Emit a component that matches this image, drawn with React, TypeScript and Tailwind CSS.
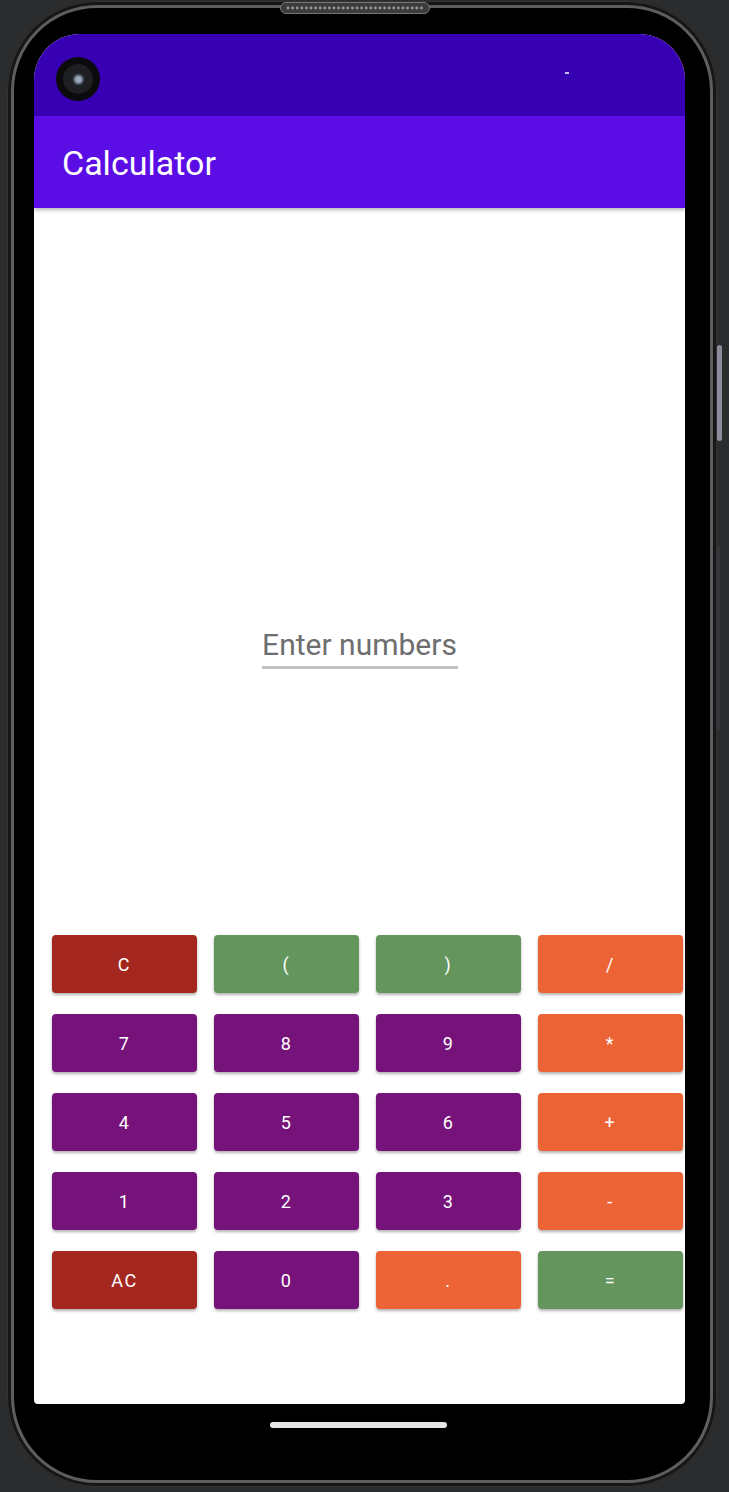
const keys = [
  { label: 'C', color: 'bg-[#a3271e]' },
  { label: '(', color: 'bg-[#63955d]' },
  { label: ')', color: 'bg-[#63955d]' },
  { label: '/', color: 'bg-[#ec6436]' },
  { label: '7', color: 'bg-[#76137a]' },
  { label: '8', color: 'bg-[#76137a]' },
  { label: '9', color: 'bg-[#76137a]' },
  { label: '*', color: 'bg-[#ec6436]' },
  { label: '4', color: 'bg-[#76137a]' },
  { label: '5', color: 'bg-[#76137a]' },
  { label: '6', color: 'bg-[#76137a]' },
  { label: '+', color: 'bg-[#ec6436]' },
  { label: '1', color: 'bg-[#76137a]' },
  { label: '2', color: 'bg-[#76137a]' },
  { label: '3', color: 'bg-[#76137a]' },
  { label: '-', color: 'bg-[#ec6436]' },
  { label: 'AC', color: 'bg-[#a3271e]' },
  { label: '0', color: 'bg-[#76137a]' },
  { label: '.', color: 'bg-[#ec6436]' },
  { label: '=', color: 'bg-[#63955d]' },
];

function Speaker() {
  return (
    <svg width="150" height="12" viewBox="0 0 150 12" className="absolute left-[280px] top-[2px]">
      <rect x="0.5" y="0.5" width="149" height="11" rx="5.5" fill="#3c3c3c" stroke="#777" />
      {Array.from({ length: 30 }).map((_, i) => (
        <circle key={i} cx={8 + i * 4.6} cy="6" r="1.4" fill="#9a9a9a" />
      ))}
    </svg>
  );
}

function Camera() {
  return (
    <div className="absolute left-[22px] top-[23px] w-[44px] h-[44px] rounded-full bg-[#0b0b0b] flex items-center justify-center">
      <div className="w-[30px] h-[30px] rounded-full bg-[#1d1f22] flex items-center justify-center">
        <div className="w-[9px] h-[9px] rounded-full bg-[#9aa8bc] blur-[1px]" />
      </div>
    </div>
  );
}

export default function App() {
  return (
    <div className="relative w-[729px] h-[1492px] overflow-hidden bg-[#2b2c2e] pl-[7px] pt-[1px]">
      <div className="w-[710px] h-[1486px] rounded-[90px] bg-[#161616] p-[4px] shadow-[inset_0_0_0_1px_#333]">
        <div className="w-full h-full rounded-[86px] border-[3px] border-[#5e5e5e] bg-black pl-[20px] pt-[26px]">
          <div className="w-[651px] h-[1370px] rounded-t-[46px] rounded-b-[4px] overflow-hidden bg-white flex flex-col font-['Roboto',sans-serif]">
            <div className="relative h-[82px] bg-[#3700b3] shrink-0">
              <Camera />
              <div className="absolute left-[531px] top-[38px] w-[4px] h-[2px] bg-[#c8c0f0]" />
            </div>
            <div className="relative z-10 h-[92px] shrink-0 bg-[#5a0de5] px-[28px] pt-[2px] flex items-center shadow-[0_2px_4px_rgba(0,0,0,0.3)]">
              <span className="text-white text-[34px] font-normal leading-none">Calculator</span>
            </div>
            <div className="flex-1 flex flex-col">
              <div className="pt-[419px] flex justify-center">
                <div className="w-[196px] flex flex-col items-center">
                  <span className="text-[30px] leading-[36px] text-[#6e6e6e]">Enter numbers</span>
                  <div className="mt-[3px] w-full h-[3px] bg-[#c2c2c2]" />
                </div>
              </div>
              <div className="mt-[266px] pl-[18px] grid grid-cols-[repeat(4,145px)] gap-x-[17px] gap-y-[21px]">
                {keys.map((k) => (
                  <button
                    key={k.label}
                    className={`${k.color} h-[58px] rounded-[4px] flex items-center justify-center text-white text-[18px] font-normal tracking-[0.09em] shadow-[0_2px_3px_rgba(0,0,0,0.3)]`}
                  >
                    {k.label}
                  </button>
                ))}
              </div>
            </div>
          </div>
          <div className="mt-[18px] ml-[236px] w-[177px] h-[6px] rounded-full bg-[#e6e6e6]" />
        </div>
      </div>
      <Speaker />
      <div className="absolute left-[717px] top-[345px] w-[5px] h-[96px] rounded-full bg-[#8a8c9c]" />
      <div className="absolute left-[716px] top-[545px] w-[4px] h-[186px] rounded-full bg-[#35363a]" />
    </div>
  );
}
